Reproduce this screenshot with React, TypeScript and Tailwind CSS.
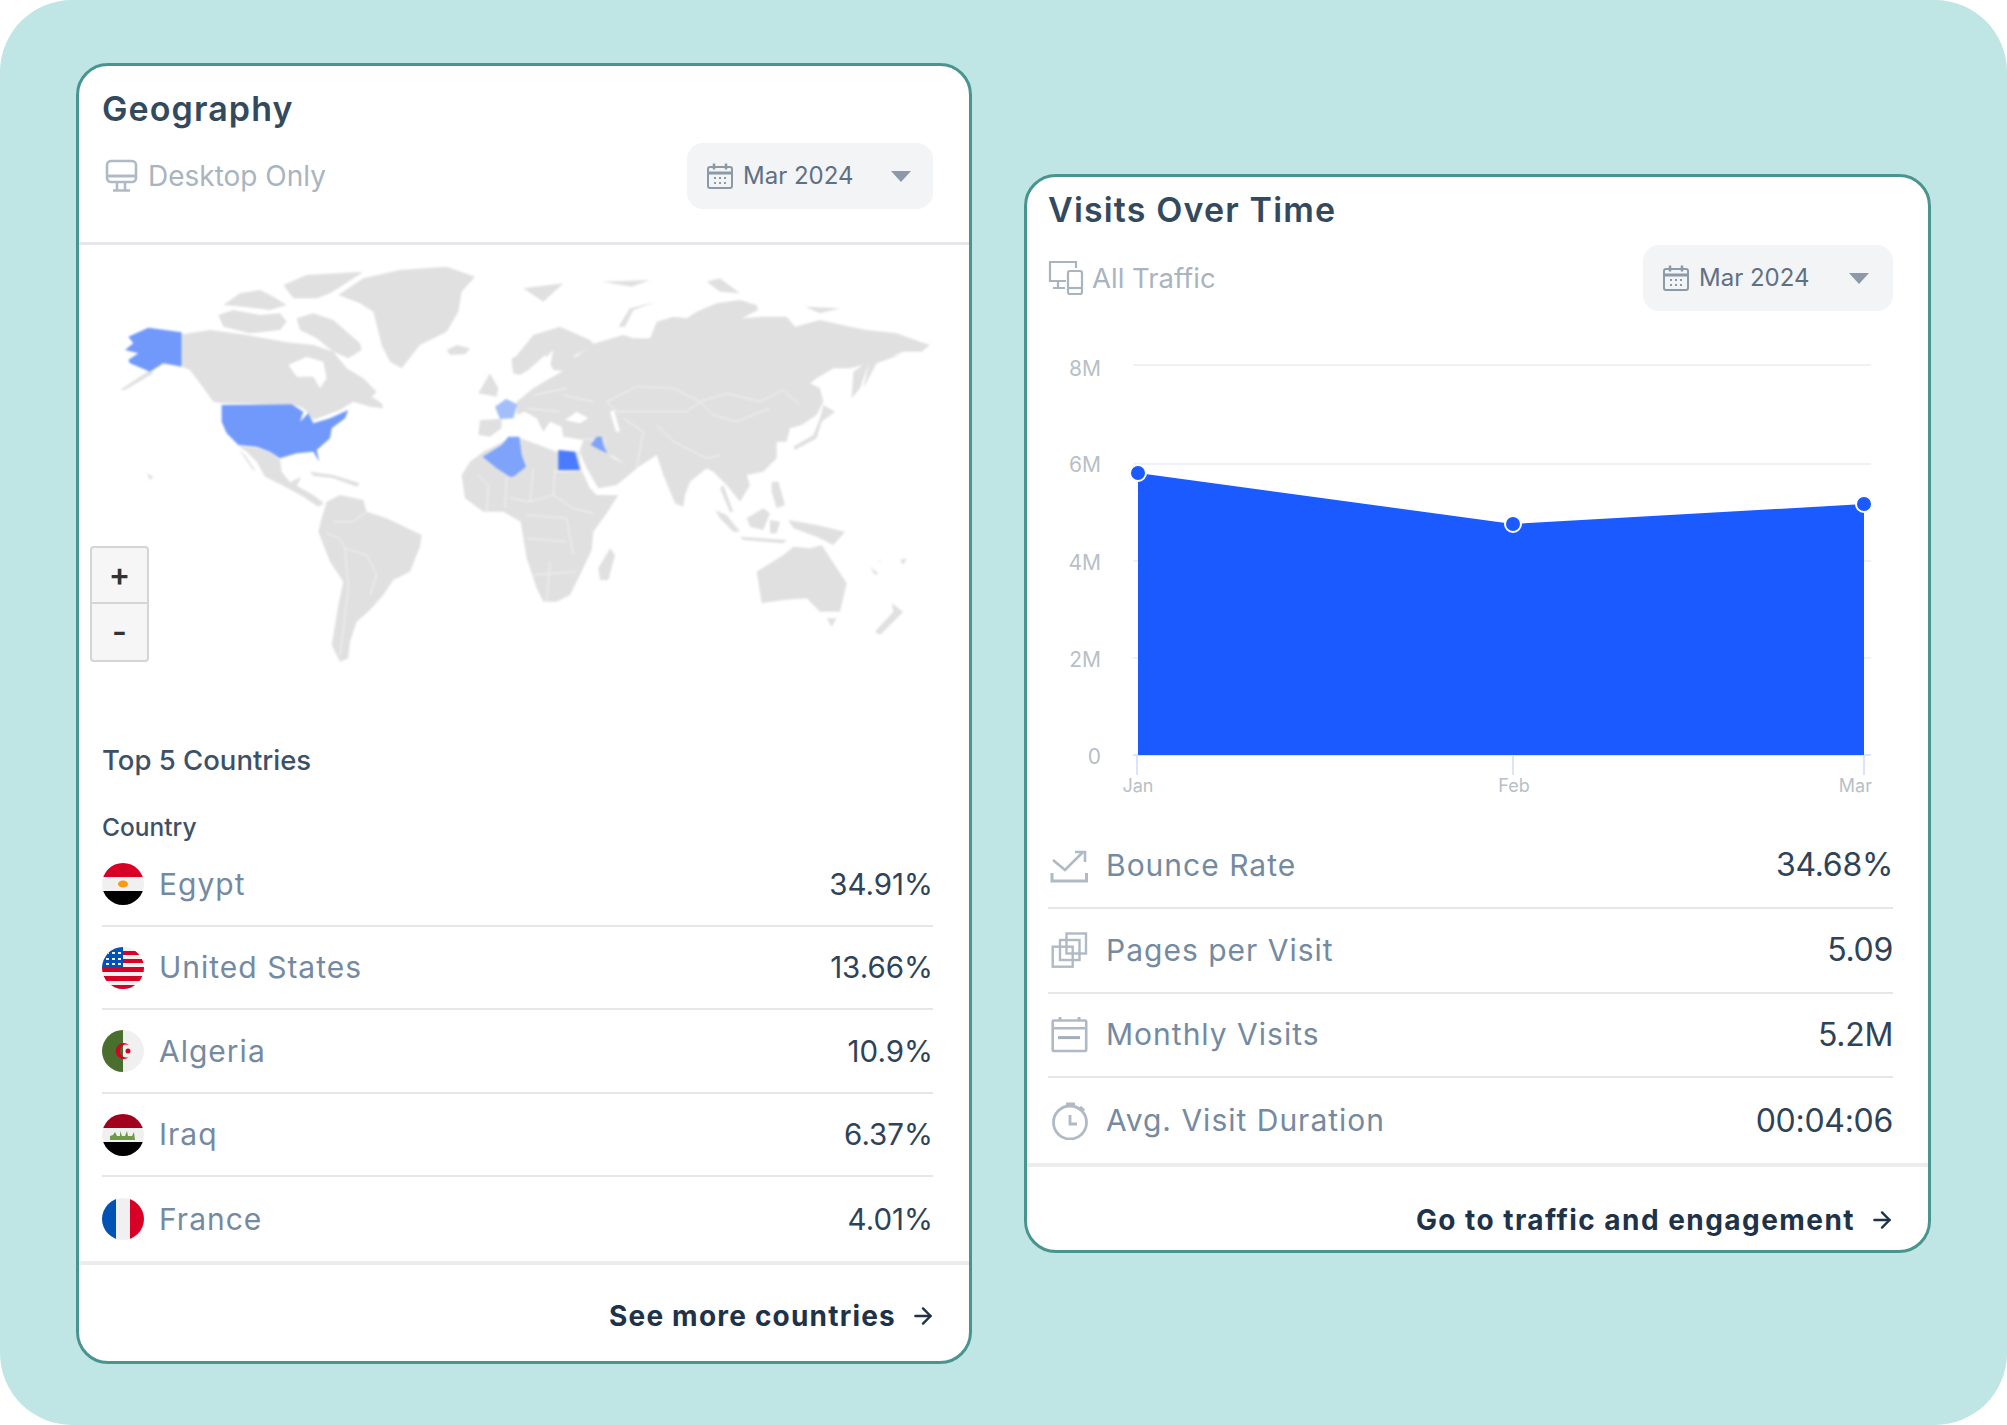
import { ArrowRight } from "lucide-react";

const font = { fontFamily: "Inter, 'Noto Sans', sans-serif" };

function CalendarIcon() {
  return (
    <svg width="28" height="28" viewBox="0 0 28 28" fill="none" stroke="#8b99a8" strokeWidth="2">
      <rect x="2" y="5" width="24" height="21" rx="2" />
      <path d="M2 11h24" strokeWidth="3" />
      <path d="M8 1.5v6M20 1.5v6" strokeWidth="2.5" />
      <path d="M8 16h2M13 16h2M18 16h2M8 21h2M13 21h2M18 21h2" strokeWidth="2" />
    </svg>
  );
}

function DateSelect({ className }: { className: string }) {
  return (
    <div className={`flex h-[66px] items-center rounded-[16px] bg-[#f3f4f6] ${className}`}>
      <CalendarIcon />
      <span className="ml-[9px] text-[24px] text-[#5f7084]">Mar 2024</span>
      <svg className="ml-auto" width="20" height="11" viewBox="0 0 20 11">
        <polygon points="0,0 20,0 10,11" fill="#8b99a8" />
      </svg>
    </div>
  );
}

function MonitorIcon() {
  return (
    <svg width="34" height="34" viewBox="0 0 34 34" fill="none" stroke="#b0bac5" strokeWidth="2.6">
      <rect x="2" y="2" width="29" height="21" rx="4" />
      <path d="M2 17h29" strokeWidth="3" />
      <path d="M12 23v8M20 23v8M8 31.5h17" />
    </svg>
  );
}

function AllTrafficIcon() {
  return (
    <svg width="36" height="36" viewBox="0 0 36 36" fill="none" stroke="#a9b4bf" strokeWidth="2.2">
      <path d="M28 8V2H2v19h16" />
      <path d="M10 21v7M5 28h12" />
      <rect x="20" y="11" width="14" height="23" rx="2" />
      <path d="M20 28h14" />
    </svg>
  );
}

function BounceIcon() {
  return (
    <svg width="38" height="38" viewBox="0 0 38 38" fill="none" stroke="#b0bac5" strokeWidth="2.6">
      <path d="M2 27v8h34.5v-8" strokeWidth="3" />
      <path d="M3 14l12 10L33 6" />
      <path d="M25 6h10v10" />
    </svg>
  );
}

function PagesIcon() {
  return (
    <svg width="38" height="38" viewBox="0 0 38 38" fill="none" stroke="#b0bac5" strokeWidth="2.4">
      <rect x="16.5" y="2.5" width="19.5" height="20" />
      <rect x="10" y="9" width="19.5" height="20" />
      <rect x="2.7" y="15.7" width="20" height="20" />
    </svg>
  );
}

function MonthIcon() {
  return (
    <svg width="38" height="38" viewBox="0 0 38 38" fill="none" stroke="#b0bac5" strokeWidth="2.6">
      <rect x="2.7" y="4.5" width="33.5" height="30.5" rx="1" />
      <path d="M2.7 12.3h33.5" />
      <path d="M10 1v4M29 1v4" strokeWidth="3" />
      <path d="M8 21.6h22" strokeWidth="3" stroke="#a3afbb" />
    </svg>
  );
}

function TimerIcon() {
  return (
    <svg width="38" height="38" viewBox="0 0 38 38" fill="none" stroke="#b0bac5" strokeWidth="2.8">
      <circle cx="20" cy="20.5" r="16.5" />
      <path d="M16 2h9M20 2v3M30 5l4 4" strokeWidth="3.2" />
      <path d="M20 13v9h7" />
    </svg>
  );
}

function FlagCircle({ id, children }: { id: string; children: React.ReactNode }) {
  return (
    <svg width="42" height="42" viewBox="0 0 42 42" className="shrink-0">
      <clipPath id={id}>
        <circle cx="21" cy="21" r="21" />
      </clipPath>
      <g clipPath={`url(#${id})`}>{children}</g>
    </svg>
  );
}

const flags: Record<string, React.ReactNode> = {
  Egypt: (
    <FlagCircle id="eg">
      <rect width="42" height="14" fill="#d80027" />
      <rect y="14" width="42" height="14" fill="#f0f0f0" />
      <rect y="28" width="42" height="14" fill="#000" />
      <ellipse cx="21" cy="21" rx="5" ry="3.5" fill="#ff9811" />
    </FlagCircle>
  ),
  "United States": (
    <FlagCircle id="us">
      <rect width="42" height="42" fill="#f0f0f0" />
      <path d="M0 4h42v4H0zM14 12h28v4H14zM0 20h42v5H0zM0 29h42v5H0zM0 38h42v4H0z" fill="#d80027" />
      <rect width="21" height="21" fill="#0052b4" />
      <path d="M4 6h3M10 6h3M16 6h3M4 12h3M10 12h3M16 12h3M4 17h3M10 17h3M16 17h3" stroke="#f0f0f0" strokeWidth="2" />
    </FlagCircle>
  ),
  Algeria: (
    <FlagCircle id="dz">
      <rect width="21" height="42" fill="#496e2d" />
      <rect x="21" width="21" height="42" fill="#f0f0f0" />
      <path d="M27 15a8 8 0 1 0 0 12 6.5 6.5 0 1 1 0-12z" fill="#d80027" />
      <circle cx="26" cy="21" r="2.5" fill="#d80027" />
    </FlagCircle>
  ),
  Iraq: (
    <FlagCircle id="iq">
      <rect width="42" height="14" fill="#a2001d" />
      <rect y="14" width="42" height="14" fill="#f0f0f0" />
      <rect y="28" width="42" height="14" fill="#000" />
      <path d="M8 26v-4l3-1 2-3 2 4h3v-5l2 5h3l2-5 1 5h4l2-4 1 8z" fill="#6e9a4c" />
    </FlagCircle>
  ),
  France: (
    <FlagCircle id="fr">
      <rect width="14" height="42" fill="#0052b4" />
      <rect x="14" width="14" height="42" fill="#f0f0f0" />
      <rect x="28" width="14" height="42" fill="#d80027" />
    </FlagCircle>
  ),
};

const countries = [
  { name: "Egypt", share: "34.91%" },
  { name: "United States", share: "13.66%" },
  { name: "Algeria", share: "10.9%" },
  { name: "Iraq", share: "6.37%" },
  { name: "France", share: "4.01%" },
];

const stats = [
  { label: "Bounce Rate", value: "34.68%", icon: <BounceIcon /> },
  { label: "Pages per Visit", value: "5.09", icon: <PagesIcon /> },
  { label: "Monthly Visits", value: "5.2M", icon: <MonthIcon /> },
  { label: "Avg. Visit Duration", value: "00:04:06", icon: <TimerIcon /> },
];

function WorldMap() {
  const land = "#e0e0e0";
  return (
    <svg width="840" height="420" viewBox="0 0 2520 1260" className="blur-[0.8px]">
      <g fill={land}>
        {/* Americas */}
        <path d="M247 238L330 225 440 240 560 262 640 270 700 290 740 340 790 370 830 410 815 425 845 445 850 460 810 455 760 440 720 465 640 495 610 460 575 448 365 445 340 440 300 385 270 345 247 335Z" />
        <path d="M355 180L400 165 480 180 540 175 560 200 540 225 450 235 370 215Z" />
        <path d="M370 150L420 115 480 105 520 125 560 150 510 165 430 155Z" />
        <path d="M550 90L620 60 790 50 730 90 690 115 650 130 580 130Z" />
        <path d="M590 190L640 175 700 195 780 265 785 285 745 310 700 290 650 250 600 225Z" />
        <path d="M715 120L790 70 900 45 1040 35 1125 65 1085 110 1075 170 1040 230 960 270 905 340 870 320 845 270 820 170 780 145Z" />
        <path d="M1040 285L1070 270 1110 280 1095 298 1050 300Z" />
        <path d="M415 572L470 578 510 592 540 612 545 650 570 682 605 665 590 692 640 720 672 745 655 755 610 725 550 692 495 665 470 620 440 590Z" />
        <path d="M418 585L435 600 468 650 455 640Z" />
        <path d="M630 650L700 660 780 685 770 695 700 670 640 662Z" />
        <path d="M680 740L720 720 790 735 800 770 860 790 965 840 960 875 930 950 880 975 850 1020 810 1065 770 1100 750 1160 745 1210 720 1220 695 1170 715 1050 730 980 690 920 655 830 665 790Z" />
        <path d="M60 405L150 345 160 355 75 405Z" />
        <path d="M140 655L160 665 150 675Z" />
        {/* Europe, Africa bits west of the seam */}
        <path d="M1135 415L1170 355 1195 400 1190 425ZM1140 495L1205 492 1205 520 1170 545 1135 540ZM1235 310L1260 300 1260 355 1240 355Z" />
        <path d="M1085 660L1110 620 1150 590 1210 560 1250 545 1290 560 1370 590 1435 590 1445 645 1470 700 1490 720 1555 720 1520 775 1480 830 1475 885 1440 960 1410 1020 1370 1040 1330 1040 1310 1000 1280 910 1270 850 1262 800 1210 770 1150 770 1095 730Z" />
      </g>
      <path d="M1135 660L1165 690 1160 770M1220 665L1215 760M1300 640L1290 740 1230 730M1365 640L1360 720 1290 740M1445 645L1365 650M1360 720L1420 760 1480 775M1280 780L1400 790 1420 900M1280 850L1400 860M1300 960L1430 950M1340 1040L1350 920" fill="none" stroke="#f4f4f4" strokeWidth="3" />
      <path d="M680 835L720 850 735 880 800 900 830 960 810 1020M735 880L745 1000 720 1200M700 800L760 800 800 770" fill="none" stroke="#f4f4f4" strokeWidth="3" />
      <g transform="translate(1200 0)" fill={land}>
        <path d="M35 320L100 240 180 215 270 255 285 270 225 300 205 350 160 345 135 300 85 345 60 360 40 355Z" />
        <path d="M50 440L100 400 150 370 205 340 220 310 285 265 370 240 400 250 450 250 470 200 520 185 560 190 590 170 650 145 720 135 770 150 775 165 725 190 790 185 860 185 885 215 960 195 1050 215 1100 225 1190 235 1260 260 1290 270 1265 290 1210 290 1130 320 1050 340 1000 340 950 370 930 385 960 400 970 440 950 480 905 510 870 520 860 560 830 560 830 610 790 650 740 660 750 690 720 740 680 690 640 650 620 640 570 680 555 720 550 755 525 745 490 660 470 600 410 640 405 645 350 690 295 700 260 640 238 590 250 555 190 545 185 515 150 500 130 530 110 490 75 470 50 480Z" />
        <path d="M670 690L700 770 690 772 660 700Z" />
        <path d="M880 575L940 540 960 490 970 450 1005 470 965 500 950 550 885 585Z" />
        <path d="M1060 350L1110 315 1080 400 1055 430Z" />
        <path d="M1110 310L1200 300 1130 325 1090 400Z" />
        <path d="M645 765L680 780 720 830 700 830 660 790ZM720 845L860 855 850 865 730 855ZM740 790L790 760 810 775 790 825 750 815ZM810 795L840 800 830 835 810 835ZM815 680L835 680 855 750 830 760 815 710ZM865 795L950 810 1035 830 1000 870 950 845 880 820Z" />
        <path d="M770 950L850 900 880 875 930 880 965 870 1040 985 1020 1070 960 1070 920 1030 850 1035 785 1045ZM980 1090L1010 1090 995 1115ZM1175 1045L1210 1070 1140 1140 1125 1130 1180 1070ZM330 880L345 900 325 975 300 975 295 940Z" />
        <path d="M70 100L190 85 130 140ZM305 80L450 75 395 95ZM620 80L660 70 720 115 660 110ZM915 155L1020 160 960 175ZM355 215L390 160 470 140 400 165 375 215ZM1130 925L1145 915 1140 915ZM1110 935L1135 955 1125 960ZM1200 915L1220 910 1210 930Z" />
      </g>
      <g transform="translate(1200 0)">
        <path d="M195 495L230 470 265 490 240 505ZM330 470L342 465 360 530 348 530ZM325 595L380 630 340 610ZM135 310L160 285 150 335 125 330Z" fill="#fff" />
        <path d="M320 440L410 395 520 400 600 440 680 415 780 440 850 405 900 450M600 440L640 480 710 500 810 460M320 440L350 470 470 470 560 470 600 440M470 510L520 560 620 610 660 600M370 490L430 530 410 640M250 550L320 560M190 420L280 440M100 420L200 400M80 460L180 470" fill="none" stroke="#f4f4f4" strokeWidth="3" />
      </g>
      {/* highlighted countries */}
      <path d="M85 245L145 218 245 232 245 335 190 325 150 350 90 325 85 315 115 295 75 285 100 265Z" fill="#7099fb" />
      <path d="M365 450L575 448 610 470 600 500 625 475 640 505 690 490 745 465 735 490 695 520 690 550 650 585 658 620 640 590 590 595 540 610 510 590 470 575 415 570 380 535 365 500Z" fill="#7099fb" />
      <path d="M1148 605L1205 570 1225 545 1258 545 1265 600 1278 635 1240 665 1230 665 1190 640Z" fill="#7ea3fb" />
      <path d="M1185 455L1218 432 1252 448 1240 490 1200 492Z" fill="#a3bffb" />
      <path d="M1375 585L1425 590 1440 645 1375 645Z" fill="#4a7bff" />
      <path d="M1472 570L1490 545 1505 545 1510 570 1522 595 1500 585Z" fill="#7ea3fb" />
      <path d="M565 330L620 305 670 320 680 370 660 400 640 365 590 365Z" fill="#fff" />
    </svg>
  );
}

function VisitsChart() {
  const ys = [
    { label: "8M", y: 366, dy: 11 },
    { label: "6M", y: 465, dy: 8 },
    { label: "4M", y: 562, dy: 9 },
    { label: "2M", y: 659, dy: 9 },
    { label: "0", y: 756, dy: 9 },
  ];
  const xs = [
    { label: "Jan", x: 1137 },
    { label: "Feb", x: 1513 },
    { label: "Mar", x: 1864 },
  ];
  const pts = [
    { x: 1138, y: 474 },
    { x: 1513, y: 525 },
    { x: 1864, y: 505 },
  ];
  return (
    <svg width="901" height="513" viewBox="1027 312 901 513" style={font}>
      {ys.map((t) => (
        <g key={t.label}>
          <line x1="1133" x2="1871" y1={t.y} y2={t.y} stroke={t.y === 756 ? "#dbe4fb" : "#f0f1f3"} strokeWidth="2" />
          <text x="1101" y={t.y + t.dy} textAnchor="end" fontSize="21" fill="#b8bfc7">
            {t.label}
          </text>
        </g>
      ))}
      {xs.map((t) => (
        <g key={t.label}>
          <line x1={t.x} x2={t.x} y1="756" y2="776" stroke="#dbe4fb" strokeWidth="2" />
          <text
            x={t.label === "Mar" ? 1872 : t.x + 1}
            y="793"
            textAnchor={t.label === "Mar" ? "end" : "middle"}
            fontSize="18"
            fill="#b8bfc7"
          >
            {t.label}
          </text>
        </g>
      ))}
      <path d="M1138 474L1513 525 1864 505V756H1138Z" fill="#1a5aff" />
      {pts.map((p) => (
        <circle key={p.x} cx={p.x} cy={p.y} r="8" fill="#1a5aff" stroke="#fff" strokeWidth="2" />
      ))}
    </svg>
  );
}

function SeeMore({ label, className }: { label: string; className: string }) {
  return (
    <div className={`flex items-center justify-end gap-[14px] border-t-4 border-[#ececec] pr-[33px] text-[28px] font-bold text-[#1e3248] ${className}`}>
      <span>{label}</span>
      <ArrowRight size={26} strokeWidth={2.2} />
    </div>
  );
}

export default function App() {
  return (
    <div className="h-[1425px] w-[2007px] overflow-hidden bg-white" style={font}>
      <div className="flex h-full items-center gap-[52px] rounded-[72px] bg-[#bfe6e4] pt-[2px] pl-[76px]">
        {/* Geography */}
        <div className="w-[896px] rounded-[32px] border-[3px] border-[#4a9490] bg-white">
          <div className="border-b-[3px] border-[#e5e7eb] pb-[33px]">
            <h2 className="mt-[23px] px-[23px] text-[34px] leading-[40px] font-semibold tracking-[1.1px] text-[#334a5e]">Geography</h2>
            <div className="mt-[14px] flex items-center justify-between pr-[36px] pl-[26px]">
              <div className="flex items-center gap-[9px] text-[28px] text-[#a9b4bf]">
                <MonitorIcon />
                <span>Desktop Only</span>
              </div>
              <DateSelect className="w-[246px] pr-[22px] pl-[19px]" />
            </div>
          </div>

          <div className="relative mt-[10px] h-[420px] pl-[21px]">
            <WorldMap />
            <div className="absolute top-[291px] left-[11px] flex w-[59px] flex-col rounded-[4px] border-2 border-[#d5d5d5] bg-[#f6f6f6] text-[#333333]">
              <div className="flex h-[56px] items-center justify-center border-b-2 border-[#d5d5d5] text-[32px] font-semibold">+</div>
              <div className="flex h-[56px] items-center justify-center text-[32px] font-semibold">-</div>
            </div>
          </div>

          <div className="px-[23px]">
            <div className="mt-[67px] text-[27.5px] leading-[36px] font-medium text-[#3d5166]">Top 5 Countries</div>
            <div className="mt-[34px] mb-[1px] text-[24.5px] leading-[30px] font-medium text-[#3d5166]">Country</div>
          </div>
          <div className="mr-[36px] ml-[23px]">
            {countries.map((c, i) => (
              <div
                key={c.name}
                className={`flex h-[83.5px] items-center ${i < countries.length - 1 ? "border-b-2 border-[#e5e7eb]" : ""}`}
              >
                {flags[c.name]}
                <span className="ml-[15px] text-[30px] tracking-[1px] text-[#748aa1]">{c.name}</span>
                <span className="ml-auto text-[29.5px] text-[#2f4358]">{c.share}</span>
              </div>
            ))}
          </div>
          <SeeMore label="See more countries" className="h-[100px] pt-[6px] tracking-[1.2px]" />
        </div>

        {/* Visits */}
        <div className="w-[907px] rounded-[32px] border-[3px] border-[#4a9490] bg-white">
          <h2 className="mt-[13px] px-[21px] text-[34px] leading-[40px] font-semibold tracking-[1.15px] text-[#334a5e]">Visits Over Time</h2>
          <div className="mt-[15px] flex items-center justify-between pr-[35px] pl-[21px]">
            <div className="flex items-center gap-[8px] text-[27.5px] text-[#a9b4bf]">
              <AllTrafficIcon />
              <span>All Traffic</span>
            </div>
            <DateSelect className="w-[250px] pr-[24px] pl-[19px]" />
          </div>
          <VisitsChart />
          <div className="mr-[35px] ml-[21px]">
            {stats.map((s, i) => (
              <div
                key={s.label}
                className={`flex h-[84.7px] items-center ${i < stats.length - 1 ? "border-b-2 border-[#e5e7eb]" : ""}`}
              >
                <span className="ml-[2px] flex">{s.icon}</span>
                <span className="ml-[18px] text-[30px] tracking-[1px] text-[#748aa1]">{s.label}</span>
                <span className="ml-auto text-[32px] tracking-[-0.3px] text-[#2f4358]">{s.value}</span>
              </div>
            ))}
          </div>
          <SeeMore label="Go to traffic and engagement" className="h-[87px] pt-[23px] tracking-[1.45px]" />
        </div>
      </div>
    </div>
  );
}
